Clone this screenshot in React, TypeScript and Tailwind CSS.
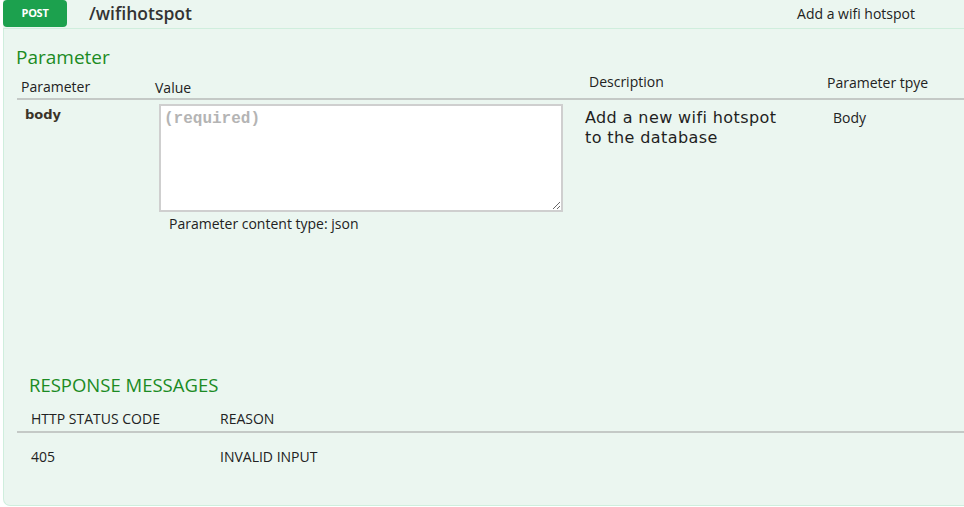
import React from "react";

// Swagger-style endpoint panel: POST /wifihotspot
const App: React.FC = () => {
  return (
    <div className="w-[964px] h-[507px] bg-white overflow-hidden font-['Open_Sans',sans-serif] text-[#222]">
      {/* Endpoint header */}
      <div className="ml-[3px] h-[29px] flex items-center bg-[#ebf6f0] border-b border-[#cfeedd]">
        <div className="w-[64px] h-[27px] self-start flex items-center justify-center bg-[#1ca14e] rounded-[4px] text-white text-[11px] font-bold tracking-tight">
          POST
        </div>
        <div className="ml-[22px] text-[17.5px] font-semibold text-[#333] leading-none">
          /wifihotspot
        </div>
        <div className="ml-auto mr-[49px] text-[14px] text-[#222] leading-none">
          Add a wifi hotspot
        </div>
      </div>

      {/* Panel body */}
      <div className="ml-[3px] h-[477px] bg-[#ebf6f0] border-l border-b border-[#cfeedd] rounded-bl-[7px] flex flex-col">
        <h2 className="ml-[12px] mt-[17px] text-[19px] leading-[22px] text-[#1b8b24]">
          Parameter
        </h2>

        {/* Parameter table */}
        <div className="ml-[13px] mt-[11px] h-[21px] flex items-end border-b-2 border-[#c4c9c6] text-[14px] leading-none">
          <div className="w-[138px] pl-[4px] pb-[4px]">Parameter</div>
          <div className="w-[434px] pb-[3px]">Value</div>
          <div className="w-[238px] pb-[9px]">Description</div>
          <div className="flex-1 pb-[8px]">Parameter tpye</div>
        </div>

        <div className="ml-[13px] flex">
          <div className="w-[142px] pl-[8px] pt-[8px] text-[13px] font-bold text-[#3a3328] font-['DejaVu_Sans',sans-serif] leading-none">
            body
          </div>
          <div className="w-[426px] pt-[4px]">
            <textarea
              placeholder="(required)"
              className="block w-[404px] h-[108px] bg-white border-2 border-[#cfcfcf] px-[3px] pt-[1px] text-[16px] font-bold font-['Liberation_Mono',monospace] placeholder:text-[#b4b4b4] outline-none"
            />
            <div className="ml-[10px] mt-[3px] text-[14px] leading-[18px]">
              Parameter content type: json
            </div>
          </div>
          <div className="w-[248px] pt-[8px] text-[16px] tracking-[0.4px] leading-[20px] text-[#1f1f1f] font-['DejaVu_Sans',sans-serif]">
            Add a new wifi hotspot
            <br />
            to the database
          </div>
          <div className="flex-1 pt-[9px] text-[14px] leading-[18px]">Body</div>
        </div>

        {/* Response messages */}
        <h2 className="ml-[25px] mt-[141px] text-[18.5px] leading-[22px] text-[#1b8b24]">
          RESPONSE MESSAGES
        </h2>
        <div className="ml-[13px] mt-[10px] h-[27px] flex items-center border-b-2 border-[#c4c9c6] text-[14px] leading-none">
          <div className="w-[203px] pl-[14px]">HTTP STATUS CODE</div>
          <div>REASON</div>
        </div>
        <div className="ml-[13px] h-[48px] flex items-center text-[14px] leading-none">
          <div className="w-[203px] pl-[14px]">405</div>
          <div>INVALID INPUT</div>
        </div>
      </div>
    </div>
  );
};

export default App;
